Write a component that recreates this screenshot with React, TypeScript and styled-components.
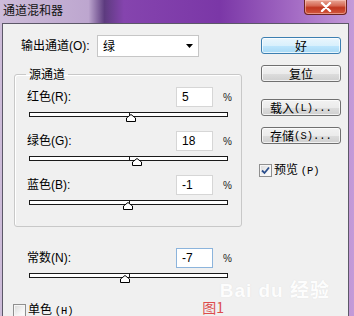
import React from 'react';
import styled, { createGlobalStyle } from 'styled-components';

const GlobalStyle = createGlobalStyle`
  html, body {
    margin: 0;
    padding: 0;
    background: #ffffff;
  }
  body {
    font-family: "Liberation Sans", "Noto Sans CJK SC", sans-serif;
    color: #000;
  }
`;

const Window = styled.div`
  width: 354px;
  height: 316px;
  overflow: hidden;
  display: flex;
  flex-direction: column;
  background: linear-gradient(
    to right,
    #cdbcd9 0%,
    #bda6cf 25%,
    #5d3b7f 29.5%,
    #8544ae 35%,
    #7b37a7 62%,
    #a56dc5 84%,
    #c49bd8 100%
  );
`;

const TitleBar = styled.div`
  height: 23px;
  flex: none;
  display: flex;
  align-items: flex-start;
  justify-content: space-between;
  padding: 0 7px 0 3px;
`;

const Title = styled.div`
  margin-top: 3px;
  font-family: "Noto Sans CJK SC", sans-serif;
  font-size: 12px;
  line-height: 14px;
  color: #111;
`;

const CloseButton = styled.div`
  width: 43px;
  height: 15px;
  box-sizing: border-box;
  display: flex;
  align-items: center;
  justify-content: center;
  border: 1px solid #6e2420;
  border-top: none;
  border-radius: 0 0 4px 4px;
  background: linear-gradient(#e9a797 0%, #d66a55 40%, #c0361f 55%, #d2583f 100%);
  box-shadow: inset 0 0 0 1px rgba(255, 210, 200, 0.5);
`;

const Body = styled.div`
  position: relative;
  flex: 1;
  margin: 0 5px 0 2px;
  display: flex;
  background: #f0f0f0;
  border: 1px solid #5c5868;
  border-bottom: none;
`;

const LeftColumn = styled.div`
  width: 229px;
  padding: 11px 0 0 10px;
  display: flex;
  flex-direction: column;
`;

const RightColumn = styled.div`
  padding: 13px 0 0 19px;
  display: flex;
  flex-direction: column;
`;

const OutputRow = styled.div`
  display: flex;
  align-items: center;
  height: 22px;
  margin-left: 8px;
`;

const OutputLabel = styled.div`
  width: 76px;
  font-size: 12px;
  line-height: 14px;
`;

const Select = styled.div`
  width: 102px;
  height: 22px;
  box-sizing: border-box;
  display: flex;
  align-items: center;
  justify-content: space-between;
  padding: 0 5px 0 5px;
  background: #fff;
  border: 1px solid #c6c6c6;
  font-family: "Noto Sans CJK SC", sans-serif;
  font-size: 12px;
  line-height: 14px;
`;

const Group = styled.fieldset`
  width: 228px;
  box-sizing: border-box;
  margin: 10px 0 0 1px;
  padding: 0;
  border: 1px solid #c8c8c8;
  border-radius: 3px;
  box-shadow: 1px 1px 0 #ffffff inset;
`;

const Legend = styled.legend`
  margin-left: 11px;
  padding: 0 3px;
  font-family: "Noto Sans CJK SC", sans-serif;
  font-size: 12px;
  line-height: 14px;
`;

const GroupInner = styled.div`
  padding: 6px 0 7px 12px;
`;

const ChannelBlock = styled.div`
  margin-bottom: 14px;
`;

const ValueRow = styled.div`
  display: flex;
  align-items: center;
  height: 20px;
`;

const ValueLabel = styled.div`
  width: 149px;
  font-size: 12px;
  line-height: 14px;
`;

const ValueBox = styled.div<{ $focused?: boolean }>`
  width: 37px;
  height: 20px;
  box-sizing: border-box;
  padding-left: 5px;
  display: flex;
  align-items: center;
  background: #fff;
  border: 1px solid ${(p) => (p.$focused ? '#8cb4dc' : '#d6d6d6')};
  font-size: 12px;
`;

const Percent = styled.div`
  margin-left: 10px;
  font-size: 10px;
  color: #222;
`;

const Slider = styled.div`
  position: relative;
  width: 199px;
  height: 5px;
  margin: 5px 0 0 2px;
  box-sizing: border-box;
  background: #fff;
  border: 1px solid #1a1a1a;
`;

const CenterTick = styled.div`
  position: absolute;
  left: 50%;
  top: 0;
  width: 1px;
  height: 100%;
  background: #1a1a1a;
`;

const Thumb = styled.svg`
  position: absolute;
  top: 1px;
  width: 10px;
  height: 8px;
  transform: translateX(-50%);
`;

const ConstantBlock = styled.div`
  margin-top: 21px;
  padding-left: 14px;
`;

const BottomRow = styled.div`
  display: flex;
  align-items: flex-start;
  margin-top: 24px;
`;

const CheckRow = styled.div<{ $shift?: number }>`
  display: flex;
  align-items: center;
  margin-left: ${(p) => p.$shift ?? 0}px;
`;

const Box = styled.div`
  width: 13px;
  height: 13px;
  box-sizing: border-box;
  display: flex;
  align-items: center;
  justify-content: center;
  border: 1px solid #8f8f8f;
  background: linear-gradient(135deg, #d8d8d8 0%, #f4f4f4 60%, #ffffff 100%);
  box-shadow: inset 0 0 0 1px #f6f6f6;
`;

const CheckLabel = styled.div`
  margin-left: 2px;
  font-family: "Noto Sans CJK SC", sans-serif;
  font-size: 12px;
  line-height: 14px;
`;

const Hint = styled.span`
  font-family: "Liberation Mono", monospace;
  font-size: 10.5px;
`;

const Caption = styled.div`
  margin: -1px 18px 0 auto;
  font-family: "Noto Sans CJK SC", sans-serif;
  font-size: 14px;
  line-height: 13px;
  color: #dc4c4c;
`;

const Button = styled.div<{ $primary?: boolean; $gap: number }>`
  width: 80px;
  height: 17px;
  box-sizing: border-box;
  margin-bottom: ${(p) => p.$gap}px;
  display: flex;
  align-items: center;
  justify-content: center;
  border: 1px solid ${(p) => (p.$primary ? '#3c7fb1' : '#707070')};
  border-radius: 3px;
  background: ${(p) =>
    p.$primary
      ? 'linear-gradient(#eaf6fd 0%, #d9f0fc 50%, #bee6fd 51%, #a7d9f5 100%)'
      : 'linear-gradient(#f2f2f2 0%, #ebebeb 50%, #dddddd 51%, #cfcfcf 100%)'};
  box-shadow: inset 0 0 0 1px rgba(255, 255, 255, 0.7);
  font-family: "Noto Sans CJK SC", sans-serif;
  font-size: 12px;
  line-height: 14px;
`;

const Watermark = styled.div`
  position: absolute;
  right: 18px;
  bottom: 16px;
  font-family: "Liberation Sans", "Noto Sans CJK SC", sans-serif;
  font-size: 19px;
  font-weight: bold;
  letter-spacing: 1px;
  color: rgba(255, 255, 255, 0.95);
  text-shadow: 0 0 1px rgba(170, 170, 170, 0.25);
`;

type ChannelProps = {
  label: string;
  value: number;
  focused?: boolean;
};

const Channel = ({ label, value, focused }: ChannelProps) => {
  const pos = ((value + 200) / 400) * 100;
  return (
    <>
      <ValueRow>
        <ValueLabel>{label}</ValueLabel>
        <ValueBox $focused={focused}>{value}</ValueBox>
        <Percent>%</Percent>
      </ValueRow>
      <Slider>
        <CenterTick />
        <Thumb viewBox="0 0 10 8" style={{ left: `${pos}%` }}>
          <polygon points="5,0.5 9.5,4 9.5,7.5 0.5,7.5 0.5,4" fill="#fff" stroke="#000" strokeWidth="1" />
        </Thumb>
      </Slider>
    </>
  );
};

const CheckBox = ({ checked }: { checked?: boolean }) => (
  <Box>
    {checked && (
      <svg width="9" height="9" viewBox="0 0 9 9">
        <path d="M1 4.5 L3.5 7 L8 1.5" fill="none" stroke="#2b4e8c" strokeWidth="1.8" />
      </svg>
    )}
  </Box>
);

export default function App() {
  return (
    <Window>
      <GlobalStyle />
      <TitleBar>
        <Title>通道混和器</Title>
        <CloseButton>
          <svg width="12" height="10" viewBox="0 0 12 10">
            <path d="M2 1 L10 9 M10 1 L2 9" stroke="#fff" strokeWidth="2.4" strokeLinecap="round" />
          </svg>
        </CloseButton>
      </TitleBar>
      <Body>
        <LeftColumn>
          <OutputRow>
            <OutputLabel>输出通道(O):</OutputLabel>
            <Select>
              <span>绿</span>
              <svg width="7" height="4" viewBox="0 0 7 4">
                <polygon points="0,0 7,0 3.5,4" fill="#000" />
              </svg>
            </Select>
          </OutputRow>
          <Group>
            <Legend>源通道</Legend>
            <GroupInner>
              <ChannelBlock>
                <Channel label="红色(R):" value={5} />
              </ChannelBlock>
              <ChannelBlock>
                <Channel label="绿色(G):" value={18} />
              </ChannelBlock>
              <ChannelBlock>
                <Channel label="蓝色(B):" value={-1} />
              </ChannelBlock>
            </GroupInner>
          </Group>
          <ConstantBlock>
            <Channel label="常数(N):" value={-7} focused />
          </ConstantBlock>
          <BottomRow>
            <CheckRow>
              <CheckBox />
              <CheckLabel>
                单色 <Hint>(H)</Hint>
              </CheckLabel>
            </CheckRow>
            <Caption>图1</Caption>
          </BottomRow>
        </LeftColumn>
        <RightColumn>
          <Button $primary $gap={11}>好</Button>
          <Button $gap={17}>复位</Button>
          <Button $gap={11}>
            载入 <Hint>(L)...</Hint>
          </Button>
          <Button $gap={18}>
            存储 <Hint>(S)...</Hint>
          </Button>
          <CheckRow $shift={-2}>
            <CheckBox checked />
            <CheckLabel>
              预览 <Hint>(P)</Hint>
            </CheckLabel>
          </CheckRow>
        </RightColumn>
        <Watermark>Bai du 经验</Watermark>
      </Body>
    </Window>
  );
}
